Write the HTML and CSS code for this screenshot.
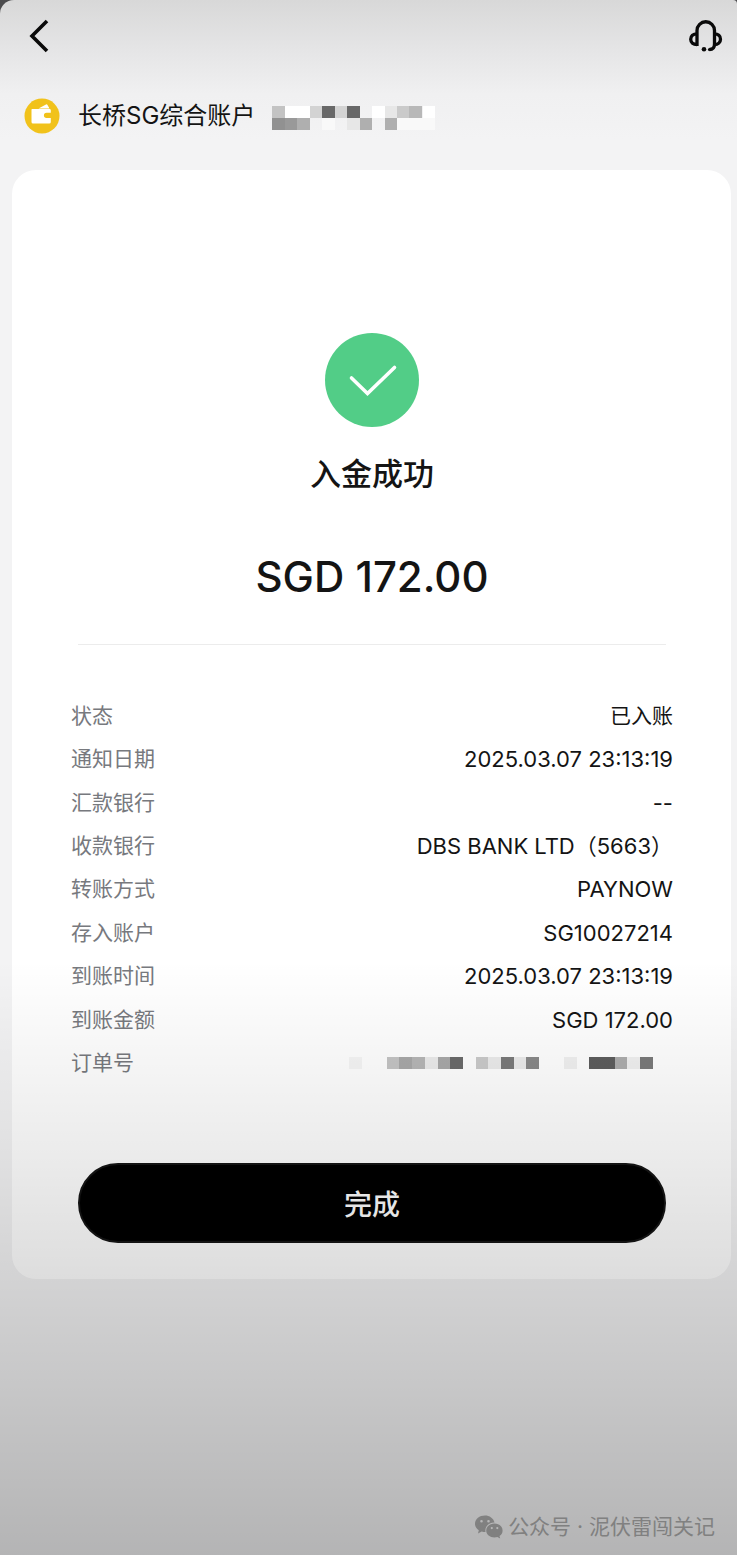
FILE: index.html
```html
<!DOCTYPE html>
<html lang="zh-CN">
<head>
<meta charset="utf-8">
<meta name="viewport" content="width=device-width, initial-scale=1">
<title>入金成功</title>
<link rel="stylesheet" href="styles.css">
</head>
<body>
<div class="screen">
  <header class="topbar">
    <button class="icon-button" type="button" aria-label="返回">
      <svg width="24" height="36" viewBox="0 0 24 36" fill="none" stroke="#0a0a0a" stroke-width="3.6"><path d="M21 3 6 18l15 15"/></svg>
    </button>
    <button class="icon-button" type="button" aria-label="客服">
      <svg width="36" height="36" viewBox="0 0 36 36" fill="none" stroke="#0a0a0a" stroke-width="3.300"><path d="M10 28V12.500a8.750 8.750 0 0 1 17.500 0V26c0 3.500-1.800 5.500-5 5.500" stroke-linecap="butt"/><path d="M10 15.800c-3.800 0-6.300 2.200-6.300 5.500 0 3.200 2.500 5.200 6.300 5.200"/><path d="M27.500 15.800c3.600 0 6 2.200 6 5.400s-2.400 5.300-6 5.300"/><circle cx="17" cy="31.300" r="2.300" fill="#0a0a0a" stroke="none"/><circle cx="22.500" cy="31.500" r="1.600" fill="#0a0a0a" stroke="none"/></svg>
    </button>
  </header>

  <section class="account">
    <svg class="account-icon" width="36" height="36" viewBox="0 0 36 36"><circle cx="18" cy="18" r="17.500" fill="#f1c21b"/><path d="M14.500 10.500 22 6.500q1-.5 1.500.500l2 3.500z" fill="#fff"/><path d="M8 11h17.500q1.300 0 1.300 1.300v2.400h-4.300a2.600 2.600 0 0 0 0 5.200h4.300V24q0 1.500-1.500 1.500H9q-1.500 0-1.500-1.500V11.500z" fill="#fff"/></svg>
    <h1 class="account-name">长桥SG综合账户</h1>
    <svg class="mosaic" width="163" height="26" viewBox="0 0 163 26" shape-rendering="crispEdges" aria-hidden="true">
      <path fill="#fff" d="M13 1h25v12H13zM100 1h13v12h-13zM151 1h12v12h-12z"/>
      <path fill="#c3c3c3" d="M0 1h13v12H0z"/><path fill="#d3d3d3" d="M38 1h12v12H38zM63 1h12v12H63z"/>
      <path fill="#686868" d="M50 1h13v12H50zM75 1h13v12H75z"/>
      <path fill="#e7e7e7" d="M113 1h12v12h-12zM75 13h13v12H75z"/>
      <path fill="#cacaca" d="M125 1h12v12h-12z"/><path fill="#b8b8b8" d="M137 1h13v12h-13z"/>
      <path fill="#919191" d="M0 13h13v12H0z"/><path fill="#999" d="M13 13h12v12H13z"/>
      <path fill="#afafaf" d="M25 13h13v12H25zM88 13h12v12H88zM113 13h12v12h-12z"/>
      <path fill="#f9f9f9" d="M50 13h13v12H50zM125 13h38v12h-38z"/>
    </svg>
  </section>

  <main class="card">
    <svg class="success-icon" width="94" height="94" viewBox="0 0 94 94" fill="none"><circle cx="47" cy="47" r="47" fill="#52cd87"/><path d="M26.500 45 42.500 60.500 69.500 34.500" stroke="#fff" stroke-width="3.600" stroke-linecap="round"/></svg>
    <h2 class="result">入金成功</h2>
    <p class="amount">SGD 172.00</p>
    <hr class="divider">
    <dl class="details">
      <div class="row"><dt>状态</dt><dd class="status">已入账</dd></div>
      <div class="row"><dt>通知日期</dt><dd>2025.03.07 23:13:19</dd></div>
      <div class="row"><dt>汇款银行</dt><dd>--</dd></div>
      <div class="row"><dt>收款银行</dt><dd>DBS BANK LTD（5663）</dd></div>
      <div class="row"><dt>转账方式</dt><dd>PAYNOW</dd></div>
      <div class="row"><dt>存入账户</dt><dd>SG10027214</dd></div>
      <div class="row"><dt>到账时间</dt><dd>2025.03.07 23:13:19</dd></div>
      <div class="row"><dt>到账金额</dt><dd>SGD 172.00</dd></div>
      <div class="row"><dt>订单号</dt><dd>
        <svg class="mosaic" width="324" height="12" viewBox="0 0 324 12" shape-rendering="crispEdges" aria-hidden="true">
          <path fill="#f5f5f5" d="M0 0h13v12H0z"/>
          <path fill="#c4c4c4" d="M38 0h12v12H38z"/><path fill="#a8a8a8" d="M50 0h13v12H50zM89 0h12v12H89z"/>
          <path fill="#b6b6b6" d="M63 0h13v12H63z"/><path fill="#ebebeb" d="M76 0h13v12H76zM139 0h13v12h-13zM165 0h12v12h-12z"/>
          <path fill="#6a6a6a" d="M101 0h13v12h-13z"/><path fill="#cacaca" d="M127 0h12v12h-12z"/>
          <path fill="#7a7a7a" d="M152 0h13v12h-13zM291 0h13v12h-13z"/><path fill="#898989" d="M177 0h13v12h-13z"/>
          <path fill="#f0f0f0" d="M215 0h13v12h-13zM278 0h13v12h-13z"/>
          <path fill="#5d5d5d" d="M240 0h26v12h-26z"/><path fill="#adadad" d="M266 0h12v12h-12z"/>
        </svg>
      </dd></div>
    </dl>
    <button class="done" type="button">完成</button>
  </main>

  <footer class="watermark">
    <svg width="28" height="24" viewBox="0 0 28 24"><path fill-rule="evenodd" fill="#aaa" d="M10 .5C4.500.500 0 4 0 8.800c0 2.700 1.500 5 3.800 6.500L3 18.500l3.700-2c1.200.4 2.400.6 3.800.6C9.500 11.500 14 7.300 19.500 7.500 18.500 3.200 14.500.500 10 .500zM6.500 5a1.300 1.300 0 1 1 0 2.600A1.300 1.300 0 0 1 6.500 5zm7 0a1.300 1.300 0 1 1 0 2.600A1.300 1.300 0 0 1 13.500 5z"/><path fill-rule="evenodd" fill="#aaa" d="M19.500 8.500c-4.700 0-8.300 3-8.300 6.900s3.700 7 8.300 7c1 0 2-.2 2.900-.5l2.800 1.500-.7-2.500c2-1.300 3.100-3.200 3.100-5.500 0-3.900-3.500-6.900-8.100-6.900zM16.800 12a1.100 1.100 0 1 1 0 2.200 1.100 1.100 0 0 1 0-2.200zm5.500 0a1.100 1.100 0 1 1 0 2.200 1.100 1.100 0 0 1 0-2.200z"/></svg>
    <span>公众号 · 泥伏雷闯关记</span>
  </footer>
</div>
</body>
</html>
```

FILE: styles.css
```css
* {
  box-sizing: border-box;
}

html {
  background: #4b4b4d;
}

body {
  margin: 0;
  font-family: Inter, "Noto Sans CJK SC", sans-serif;
  color: #141414;
}

h1, h2, p, dl, dd {
  margin: 0;
}

button {
  border: 0;
  padding: 0;
  font-family: inherit;
  cursor: pointer;
}

svg {
  display: block;
  flex: none;
}

.screen {
  position: relative;
  display: flex;
  flex-direction: column;
  min-height: 100vh;
  overflow: hidden;
  border-top-left-radius: 14px;
  border-top-right-radius: 4px;
  background: linear-gradient(#d8d8d8, #e4e4e5 46px, #f0f0f1 94px, #f3f3f4 140px);
}

/* Shade that darkens the lower part of the screen */
.screen::after {
  content: "";
  position: absolute;
  inset: 0;
  pointer-events: none;
  background: linear-gradient(transparent 960px, rgb(0 0 0 / 4%) 1060px, rgb(0 0 0 / 8%) 1155px, rgb(0 0 0 / 13%) 1270px, rgb(0 0 0 / 26%) 1555px);
}

.topbar {
  display: flex;
  justify-content: space-between;
  padding: 18px 14px 0 26px;
}

.icon-button {
  background: none;
}

.account {
  display: flex;
  align-items: center;
  padding: 42px 24px 34px;
}

.account-name {
  margin: 0 17px 0 18px;
  font-size: 24px;
  font-weight: 400;
  line-height: 40px;
}

.account .mosaic {
  margin-top: 3px;
}

.card {
  display: flex;
  flex-direction: column;
  margin: 0 6px 0 12px;
  padding: 163px 58px 36px 59px;
  border-radius: 24px;
  background: #fff;
}

.success-icon {
  align-self: center;
}

.result {
  margin-top: 24px;
  font-size: 31px;
  font-weight: 500;
  line-height: 46px;
  text-align: center;
}

.amount {
  margin-top: 52px;
  font-size: 42px;
  font-weight: 500;
  line-height: 56px;
  text-align: center;
}

.divider {
  width: auto;
  height: 1px;
  margin: 39px 7px 0;
  border: 0;
  background: #ececec;
}

.details {
  display: grid;
  grid-auto-rows: 1fr;
  min-height: 391px;
  margin-top: 49px;
  font-size: 22px;
  line-height: 30px;
}

.row {
  display: flex;
  align-items: center;
  justify-content: space-between;
}

.row dt,
.row .status {
  font-size: 21px;
}

.row dt {
  color: #77797e;
}

.done {
  height: 80px;
  margin: 78px 7px 0;
  border: 2px solid #151515;
  border-radius: 40px;
  background: #000;
  color: #fff;
  font-size: 28px;
  font-weight: 500;
}

.watermark {
  display: flex;
  align-items: center;
  justify-content: flex-end;
  gap: 5px;
  margin-top: auto;
  padding: 0 22px 12px;
  color: #aaa;
  font-size: 21px;
  line-height: 32px;
}
```
